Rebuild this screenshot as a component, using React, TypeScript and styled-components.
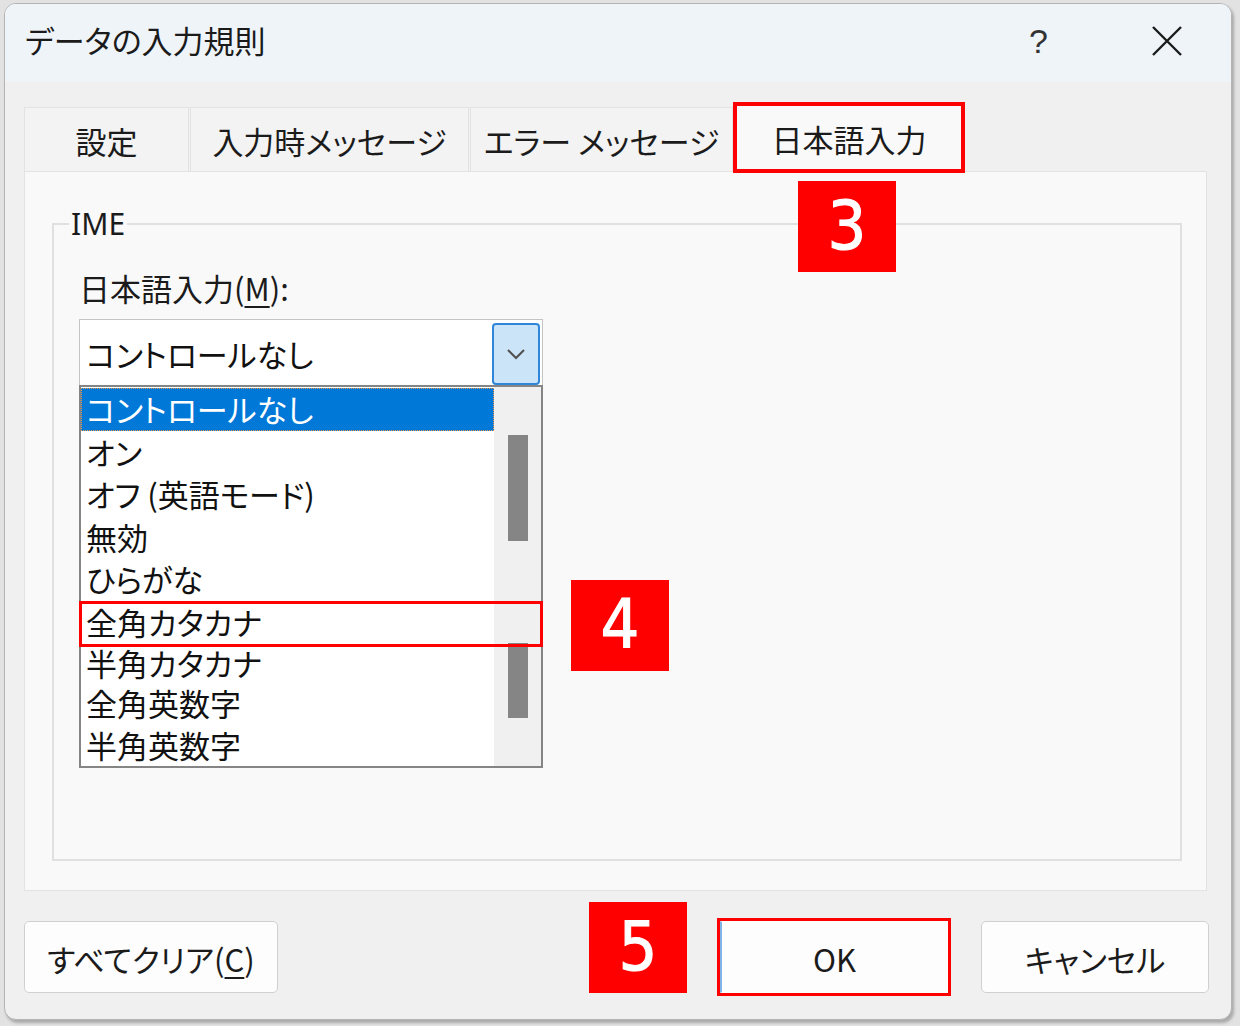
import React from "react";
import styled, { createGlobalStyle } from "styled-components";

const GlobalStyle = createGlobalStyle`
  html, body { margin: 0; padding: 0; }
  body {
    background: #e2e2e2;
    font-family: "Noto Sans CJK JP", "Noto Sans", sans-serif;
    font-feature-settings: "palt";
    color: #111;
  }
  * { box-sizing: border-box; }
`;

const Page = styled.div`
  width: 1240px;
  height: 1026px;
  padding: 3px 0 0 4px;
  overflow: hidden;
`;

const Dialog = styled.div`
  position: relative;
  width: 1228px;
  height: 1017px;
  display: flex;
  flex-direction: column;
  background: #f0f0f0;
  border: 1px solid #b4b4b4;
  border-radius: 12px;
  overflow: hidden;
  box-shadow: 2px 3px 3px rgba(0, 0, 0, 0.25);
`;

const TitleBar = styled.div`
  height: 78px;
  flex: none;
  display: flex;
  align-items: center;
  justify-content: space-between;
  padding: 0 49px 0 20px;
  background: #eff4f9;
`;

const Title = styled.div`
  font-size: 31px;
  line-height: 40px;
  margin-top: -6px;
  color: #1b1b1b;
`;

const TitleButtons = styled.div`
  display: flex;
  align-items: center;
  gap: 104px;
  margin-top: -4px;
`;

const Help = styled.span`
  font-family: "Liberation Sans", sans-serif;
  font-size: 34px;
  font-weight: 400;
  color: #333;
  line-height: 40px;
`;

const Body = styled.div`
  flex: 1;
  display: flex;
  flex-direction: column;
  padding: 20px 24px 25px 19px;
`;

const TabRow = styled.div`
  display: flex;
  align-items: flex-end;
  height: 69px;
`;

const Tab = styled.div<{ $w: number; $active?: boolean }>`
  width: ${(p) => p.$w}px;
  height: ${(p) => (p.$active ? 69 : 64)}px;
  display: flex;
  align-items: center;
  justify-content: center;
  padding-top: ${(p) => (p.$active ? 0 : 2)}px;
  font-size: 31px;
  color: #1b1b1b;
  background: ${(p) => (p.$active ? "#f9f9f9" : "#f3f3f3")};
  border: 1px solid #e3e3e3;
  border-bottom: none;
  margin-right: ${(p) => (p.$active ? 0 : 1)}px;
  position: relative;
  z-index: ${(p) => (p.$active ? 1 : 0)};
  margin-bottom: ${(p) => (p.$active ? -1 : 0)}px;
  outline: ${(p) => (p.$active ? "4px solid #ff0000" : "none")};
  outline-offset: -3px;
`;

const Panel = styled.div`
  height: 720px;
  background: #f9f9f9;
  border: 1px solid #e3e3e3;
  padding: 34px 24px 29px 27px;
  display: flex;
`;

const Group = styled.fieldset`
  flex: 1;
  margin: 0;
  padding: 0;
  border: 2px solid #e0e0e0;
  min-width: 0;
`;

const Legend = styled.legend`
  font-family: "Noto Sans", "Noto Sans CJK JP", sans-serif;
  font-size: 30px;
  line-height: 36px;
  margin-left: 15px;
  padding: 0 2px;
  color: #1b1b1b;
`;

const GroupInner = styled.div`
  padding: 26px 0 0 25px;
  display: flex;
  flex-direction: column;
  align-items: flex-start;
`;

const FieldLabel = styled.div`
  font-size: 31px;
  line-height: 40px;
  margin-left: 0;
  color: #1b1b1b;
  u { text-underline-offset: 5px; text-decoration-thickness: 2px; }
`;

const Combo = styled.div`
  margin-top: 11px;
  width: 464px;
  height: 66px;
  background: #fff;
  border: 1px solid #c4c4c4;
  border-bottom: none;
  display: flex;
  align-items: center;
  justify-content: space-between;
  padding: 2px 2px 0 6px;
`;

const ComboText = styled.span`
  font-size: 31px;
  line-height: 40px;
  color: #111;
`;

const DropButton = styled.div`
  width: 48px;
  height: 62px;
  background: #cce4f7;
  border: 2px solid #2f86d8;
  border-radius: 4px;
  display: flex;
  align-items: center;
  justify-content: center;
`;

const ListBox = styled.div`
  position: relative;
  width: 464px;
  height: 383px;
  background: #fff;
  border: 2px solid #858585;
  display: flex;
`;

const Items = styled.div`
  flex: 1;
  display: flex;
  flex-direction: column;
  padding-top: 1px;
`;

const Item = styled.div<{ $h: number; $selected?: boolean }>`
  height: ${(p) => p.$h}px;
  flex: none;
  display: flex;
  align-items: center;
  padding-left: 4px;
  font-size: 31px;
  line-height: 34px;
  white-space: nowrap;
  color: ${(p) => (p.$selected ? "#fff" : "#111")};
  background: ${(p) => (p.$selected ? "#0078d7" : "transparent")};
  border: 1px dotted ${(p) => (p.$selected ? "#e99a4c" : "transparent")};
`;

const ScrollTrack = styled.div`
  width: 47px;
  flex: none;
  background: #f0f0f0;
  display: flex;
  flex-direction: column;
  padding-left: 14px;
`;

const Thumb = styled.div<{ $top: number; $h: number }>`
  width: 20px;
  margin-top: ${(p) => p.$top}px;
  height: ${(p) => p.$h}px;
  background: #858585;
`;

const RowMark = styled.div`
  position: absolute;
  left: -2px;
  right: -2px;
  top: 214px;
  height: 46px;
  border: 3px solid #ff0000;
  pointer-events: none;
`;

const ButtonRow = styled.div`
  margin-top: 30px;
  margin-right: -2px;
  display: flex;
  align-items: center;
`;

const Button = styled.div<{ $w: number }>`
  width: ${(p) => p.$w}px;
  height: 72px;
  background: #fdfdfd;
  border: 1px solid #d0d0d0;
  border-radius: 5px;
  display: flex;
  align-items: center;
  justify-content: center;
  font-size: 31px;
  color: #1b1b1b;
  padding-top: 2px;
  u { text-underline-offset: 5px; text-decoration-thickness: 2px; }
`;

const Mark = styled.div`
  border: 3px solid #ff0000;
  padding: 0;
  margin: -3px 30px -3px 0;
  display: flex;
  & > ${Button} {
    border-color: #fdfdfd;
    border-left: 2px solid #7fb4e6;
    border-radius: 0;
  }
`;

const Spacer = styled.div`
  flex: 1;
`;

const Badge = styled.div<{ $x: number; $y: number }>`
  position: absolute;
  left: ${(p) => p.$x}px;
  top: ${(p) => p.$y}px;
  width: 98px;
  height: 91px;
  background: #ff0000;
  color: #fff;
  display: flex;
  align-items: center;
  justify-content: center;
  font-family: "Liberation Sans Narrow", "DejaVu Sans Condensed", Roboto, sans-serif;
  font-weight: 400;
  font-size: 68px;
  line-height: 1;
  padding-bottom: 2px;
  -webkit-text-stroke: 1px #fff;
`;

const Chevron = () => (
  <svg width="20" height="12" viewBox="0 0 20 12">
    <path d="M2 2 L10 10 L18 2" fill="none" stroke="#505050" strokeWidth="2" />
  </svg>
);

const CloseIcon = () => (
  <svg width="30" height="30" viewBox="0 0 30 30">
    <path d="M1 1 L29 29 M29 1 L1 29" stroke="#1b1b1b" strokeWidth="2.4" fill="none" />
  </svg>
);

const items: { label: string; h: number; selected?: boolean }[] = [
  { label: "コントロールなし", h: 42.5, selected: true },
  { label: "オン", h: 42.5 },
  { label: "オフ (英語モード)", h: 42.5 },
  { label: "無効", h: 42.5 },
  { label: "ひらがな", h: 42.5 },
  { label: "全角カタカナ", h: 43 },
  { label: "半角カタカナ", h: 39 },
  { label: "全角英数字", h: 41.5 },
  { label: "半角英数字", h: 42.5 },
];

export default function App() {
  return (
    <>
      <GlobalStyle />
      <Page>
        <Dialog>
          <TitleBar>
            <Title>データの入力規則</Title>
            <TitleButtons>
              <Help>?</Help>
              <CloseIcon />
            </TitleButtons>
          </TitleBar>
          <Body>
            <TabRow>
              <Tab $w={165}>設定</Tab>
              <Tab $w={279}>入力時メッセージ</Tab>
              <Tab $w={263}>エラー メッセージ</Tab>
              <Tab $w={230} $active>
                日本語入力
              </Tab>
            </TabRow>
            <Panel>
              <Group>
                <Legend>IME</Legend>
                <GroupInner>
                  <FieldLabel>
                    日本語入力(<u>M</u>):
                  </FieldLabel>
                  <Combo>
                    <ComboText>コントロールなし</ComboText>
                    <DropButton>
                      <Chevron />
                    </DropButton>
                  </Combo>
                  <ListBox>
                    <Items>
                      {items.map((it) => (
                        <Item key={it.label} $h={it.h} $selected={it.selected}>
                          {it.label}
                        </Item>
                      ))}
                    </Items>
                    <ScrollTrack>
                      <Thumb $top={48} $h={106} />
                      <Thumb $top={102} $h={75} />
                    </ScrollTrack>
                    <RowMark />
                  </ListBox>
                </GroupInner>
              </Group>
            </Panel>
            <ButtonRow>
              <Button $w={254}>
                すべてクリア(<u>C</u>)
              </Button>
              <Spacer />
              <Mark>
                <Button $w={228}>OK</Button>
              </Mark>
              <Button $w={228}>キャンセル</Button>
            </ButtonRow>
          </Body>
          <Badge $x={793} $y={177}>3</Badge>
          <Badge $x={566} $y={576}>4</Badge>
          <Badge $x={584} $y={898}>5</Badge>
        </Dialog>
      </Page>
    </>
  );
}
